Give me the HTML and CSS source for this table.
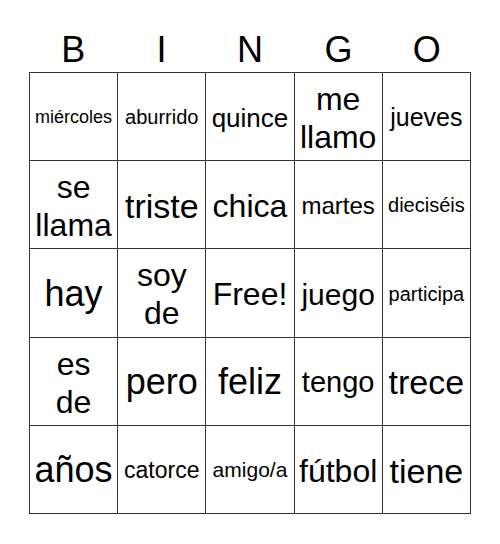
FILE: index.html
```html
<!DOCTYPE html>
<html>
<head>
<meta charset="utf-8">
<link rel="stylesheet" href="styles.css">
</head>
<body>
<div class="card">
  <div class="head">
    <span>B</span><span>I</span><span>N</span><span>G</span><span>O</span>
  </div>
  <table class="board">
    <tr>
      <td class="s18">miércoles</td>
      <td class="s20">aburrido</td>
      <td class="s26">quince</td>
      <td class="s32">me<br>llamo</td>
      <td class="s25">jueves</td>
    </tr>
    <tr>
      <td class="s32">se<br>llama</td>
      <td class="s34">triste</td>
      <td class="s32">chica</td>
      <td class="s24">martes</td>
      <td class="s20">dieciséis</td>
    </tr>
    <tr>
      <td class="s36">hay</td>
      <td class="s32">soy<br>de</td>
      <td class="s32">Free!</td>
      <td class="s30">juego</td>
      <td class="s20">participa</td>
    </tr>
    <tr>
      <td class="s32">es<br>de</td>
      <td class="s36">pero</td>
      <td class="s36">feliz</td>
      <td class="s29">tengo</td>
      <td class="s34">trece</td>
    </tr>
    <tr>
      <td class="s36">años</td>
      <td class="s23">catorce</td>
      <td class="s21">amigo/a</td>
      <td class="s32">fútbol</td>
      <td class="s34">tiene</td>
    </tr>
  </table>
</div>
</body>
</html>
```

FILE: styles.css
```css
html, body {
  margin: 0;
  padding: 0;
  background: #fff;
}
body {
  font-family: "Liberation Sans", Arial, sans-serif;
  color: #000;
}
.card {
  width: 442px;
  margin: 0 auto;
  padding-top: 30px;
}
.head {
  display: grid;
  grid-template-columns: repeat(5, 1fr);
  height: 42px;
  font-size: 36px;
  line-height: 40px;
  text-align: center;
}
.board {
  width: 442px;
  height: 442px;
  border-collapse: collapse;
  table-layout: fixed;
}
.board tr {
  height: 20%;
}
.board td {
  border: 1px solid #333;
  text-align: center;
  vertical-align: middle;
  padding: 3px 0 0;
  line-height: 1.19;
  overflow: hidden;
}
.s18 { font-size: 18px; }
.s20 { font-size: 20px; }
.s21 { font-size: 21px; }
.s23 { font-size: 23px; }
.s24 { font-size: 24px; }
.s25 { font-size: 25px; }
.s26 { font-size: 26px; }
.s29 { font-size: 29px; }
.s30 { font-size: 30px; }
.s32 { font-size: 32px; }
.s34 { font-size: 34px; }
.s36 { font-size: 36px; }
```
